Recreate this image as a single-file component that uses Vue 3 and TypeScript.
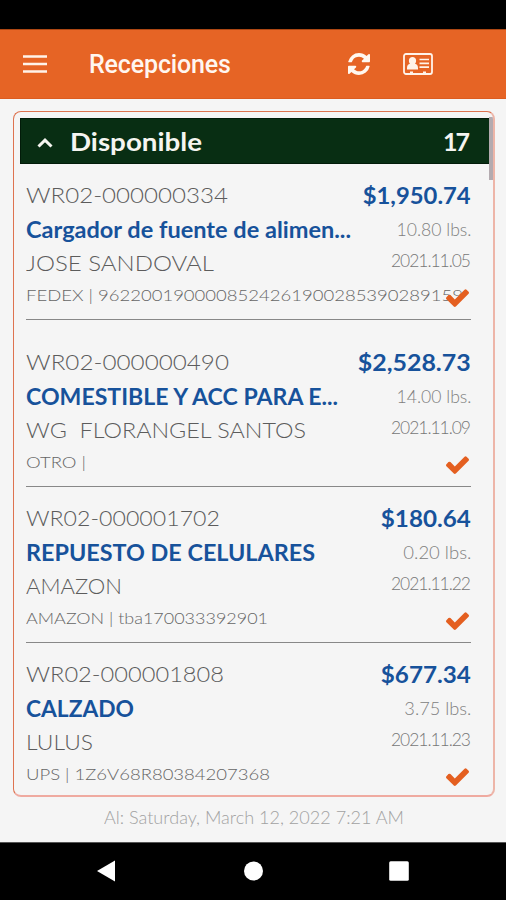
<script setup lang="ts">
interface Fitted {
  text: string
  width: number
}

interface Reception {
  code: Fitted
  title: Fitted
  name: Fitted
  carrier: Fitted
  price: Fitted
  weight: Fitted
  date: Fitted
}

const fitted = (text: string, width: number): Fitted => ({ text, width })

const receptions: Reception[] = [
  {
    code: fitted('WR02-000000334', 202),
    title: fitted('Cargador de fuente de alimen...', 325),
    name: fitted('JOSE SANDOVAL', 188),
    carrier: fitted('FEDEX | 9622001900008524261900285390289159', 437),
    price: fitted('$1,950.74', 108),
    weight: fitted('10.80 lbs.', 75),
    date: fitted('2021.11.05', 80),
  },
  {
    code: fitted('WR02-000000490', 203),
    title: fitted('COMESTIBLE Y ACC PARA E...', 312),
    name: fitted('WG  FLORANGEL SANTOS', 280),
    carrier: fitted('OTRO |', 60),
    price: fitted('$2,528.73', 113),
    weight: fitted('14.00 lbs.', 75),
    date: fitted('2021.11.09', 80),
  },
  {
    code: fitted('WR02-000001702', 194),
    title: fitted('REPUESTO DE CELULARES', 289),
    name: fitted('AMAZON', 96),
    carrier: fitted('AMAZON | tba170033392901', 242),
    price: fitted('$180.64', 90),
    weight: fitted('0.20 lbs.', 68),
    date: fitted('2021.11.22', 80),
  },
  {
    code: fitted('WR02-000001808', 198),
    title: fitted('CALZADO', 108),
    name: fitted('LULUS', 67),
    carrier: fitted('UPS | 1Z6V68R80384207368', 244),
    price: fitted('$677.34', 90),
    weight: fitted('3.75 lbs.', 67),
    date: fitted('2021.11.23', 80),
  },
]

// Widens short lines by stretching their letters; tightens long ones by tracking.
const vFit = {
  mounted(el: HTMLElement, binding: { value: number }) {
    const natural = el.getBoundingClientRect().width
    if (binding.value > natural) {
      el.style.transform = `scaleX(${binding.value / natural})`
      return
    }
    const gaps = Math.max(1, (el.textContent ?? '').length - 1)
    const spacing = (binding.value - natural) / gaps
    el.style.letterSpacing = `${spacing}px`
    el.style.marginRight = `${-spacing}px`
  },
}
</script>

<template>
  <div class="screen">
    <div class="status-bar"></div>
    <header class="app-bar">
      <svg class="menu-icon" viewBox="0 0 24 18">
        <path d="M0 1.5h24M0 9h24M0 16.5h24" />
      </svg>
      <h1><span v-fit="142">Recepciones</span></h1>
      <svg class="refresh-icon" viewBox="0 128 1536 1536">
        <path d="M1511 1056q0 5-1 7-64 268-268 434.5t-478 166.5q-146 0-282.5-55t-243.5-157l-129 129q-19 19-45 19t-45-19-19-45v-448q0-26 19-45t45-19h448q26 0 45 19t19 45-19 45l-137 137q71 66 161 102t187 36q134 0 250-65t186-179q11-17 53-117 8-23 30-23h192q13 0 22.5 9.5t9.5 22.5zm25-800v448q0 26-19 45t-45 19h-448q-26 0-45-19t-19-45 19-45l138-138q-148-137-349-137-134 0-250 65t-186 179q-11 17-53 117-8 23-30 23h-199q-13 0-22.5-9.5t-9.5-22.5v-7q65-268 270-434.5t480-166.5q146 0 284 55.5t245 156.5l130-129q19-19 45-19t45 19 19 45z" />
      </svg>
      <svg class="card-icon" viewBox="0 0 30 22">
        <rect class="outline" x="1" y="1" width="28" height="20" rx="2" />
        <path class="solid" d="M4 16.500v-1.500c0-2.500 1.200-4 3-4.200C6.100 9.900 5.900 8.600 5.900 7.500 5.900 5.200 7.400 4 9.500 4s3.600 1.200 3.600 3.500c0 1.100-.2 2.400-1.100 3.300 1.800.2 3 1.700 3 4.200V16.500zM7 18.500h3V20H7zM20 18.500h3V20h-3z" />
        <path class="lines" d="M16.500 6.500H26M16.500 10.300H26M16.500 14.200H26" />
      </svg>
    </header>

    <main class="content">
      <section class="card">
        <div class="group">
          <svg class="chevron" viewBox="0 0 16 10"><path d="M1.500 8.500 8 2.200l6.500 6.300" /></svg>
          <h2><span v-fit="132">Disponible</span></h2>
          <span class="count"><span v-fit="27">17</span></span>
        </div>
        <ul class="list">
          <li v-for="item in receptions" :key="item.code.text" class="row">
            <div class="details">
              <div class="line"><span v-fit="item.code.width">{{ item.code.text }}</span></div>
              <div class="line title"><span v-fit="item.title.width">{{ item.title.text }}</span></div>
              <div class="line"><span v-fit="item.name.width">{{ item.name.text }}</span></div>
              <div class="line carrier"><span v-fit="item.carrier.width">{{ item.carrier.text }}</span></div>
            </div>
            <div class="figures">
              <div class="line price"><span v-fit="item.price.width">{{ item.price.text }}</span></div>
              <div class="line weight"><span v-fit="item.weight.width">{{ item.weight.text }}</span></div>
              <div class="line date"><span v-fit="item.date.width">{{ item.date.text }}</span></div>
              <div class="check">
                <svg viewBox="121 314 1550 1208">
                  <path d="M1671 566q0 40-28 68l-724 724-136 136q-28 28-68 28t-68-28l-136-136-362-362q-28-28-28-68t28-68l136-136q28-28 68-28t68 28l294 295 656-657q28-28 68-28t68 28l136 136q28 28 28 68z" />
                </svg>
              </div>
            </div>
          </li>
        </ul>
        <div class="scrollbar"></div>
      </section>
      <p class="updated"><span v-fit="300">Al: Saturday, March 12, 2022 7:21 AM</span></p>
    </main>

    <nav class="nav-bar">
      <svg viewBox="0 0 20 22"><path d="M1 11 19 .5v21z" /></svg>
      <svg viewBox="0 0 20 22"><circle cx="10.500" cy="11" r="9.500" /></svg>
      <svg viewBox="0 0 20 22"><rect x=".2" y="1.200" width="19.600" height="19.600" rx="1.500" /></svg>
    </nav>
  </div>
</template>

<style>
body {
  margin: 0;
  background: #f5f5f5;
}
</style>

<style scoped>
.screen {
  display: flex;
  flex-direction: column;
  width: 506px;
  height: 900px;
  overflow: hidden;
  background: #f5f5f5;
  font-family: Lato, "Liberation Sans", sans-serif;
}

.status-bar {
  flex: none;
  height: 29px;
  background: #000;
}

.app-bar {
  display: flex;
  flex: none;
  align-items: center;
  box-sizing: border-box;
  height: 70px;
  padding-left: 23px;
  border-top: 1px solid #ad4713;
  border-bottom: 1px solid #dc5c20;
  background: #e66425;
}

.menu-icon {
  width: 24px;
  height: 18px;
  fill: none;
  stroke: #fff3ea;
  stroke-width: 2.6;
}

h1 {
  width: 259px;
  margin: 2px 0 0 42px;
  color: #fff6f0;
  font: 500 25px/30px Roboto, sans-serif;
  white-space: nowrap;
}

h1 span,
h2 span,
.count span,
.line span,
.updated span {
  display: inline-block;
  transform-origin: left center;
}

.figures .line span,
.count span {
  transform-origin: right center;
}

.refresh-icon {
  width: 22px;
  height: 22px;
  fill: #fff8f0;
}

.card-icon {
  width: 30px;
  height: 22px;
  margin-left: 33px;
}

.outline {
  fill: none;
  stroke: #fff3ea;
  stroke-width: 1.8;
}

.solid {
  fill: #fff3ea;
}

.lines {
  stroke: #fff3ea;
  stroke-width: 1.7;
}

.content {
  display: flex;
  flex: 1;
  flex-direction: column;
  min-height: 0;
  padding: 12px 11px 0 13px;
}

.card {
  position: relative;
  box-sizing: border-box;
  height: 686px;
  padding: 6px 4px 0 6px;
  overflow: hidden;
  border: 1px solid #de7350;
  border-right: 2px solid #edb5a8;
  border-bottom: 2px solid #efaaa0;
  border-radius: 8px;
}

.group {
  display: flex;
  align-items: center;
  box-sizing: border-box;
  width: 470px;
  height: 46px;
  padding: 0 19px 0 16px;
  border: 1px solid #021b09;
  background: #082e13;
  color: #f5f5f0;
}

.chevron {
  width: 16px;
  height: 10px;
  margin-top: 3px;
  fill: none;
  stroke: #f5f5f0;
  stroke-width: 3;
}

h2 {
  margin: 0 0 1px 17px;
  font: 700 25px/30px Lato, sans-serif;
}

.count {
  margin: 0 0 1px auto;
  font: 700 25px/30px Lato, sans-serif;
}

.list {
  margin: 0;
  padding: 0 18px 0 6px;
  list-style: none;
}

.row {
  display: flex;
  justify-content: space-between;
  box-sizing: border-box;
  height: 156px;
  padding-top: 14px;
  border-bottom: 1px solid #888;
}

.row:first-child {
  margin-bottom: 11px;
}

.row:last-child {
  border-bottom: 0;
}

.details {
  flex: 1;
  min-width: 0;
}

.figures {
  display: flex;
  flex: none;
  flex-direction: column;
  align-items: flex-end;
}

.line {
  height: 34px;
  color: #5c5c5c;
  font-size: 22px;
  font-weight: 300;
  line-height: 34px;
  white-space: pre;
}

.title,
.price {
  color: #17529b;
  font-weight: 700;
  line-height: 36px;
}

.carrier {
  height: 30px;
  color: #666;
  font-size: 16.500px;
  line-height: 30px;
}

.weight {
  color: #808080;
  font-size: 17.500px;
  line-height: 36px;
}

.date {
  height: 30px;
  color: #777;
  font-size: 17.500px;
  line-height: 30px;
}

.check {
  display: flex;
  align-items: center;
  height: 46px;
  margin-right: 2px;
  transform: translateZ(0);
}

.check svg {
  width: 23px;
  height: 18px;
  fill: #e45f20;
}

.scrollbar {
  position: absolute;
  top: 5px;
  right: 0;
  width: 4px;
  height: 63px;
  background: #b4abb0;
}

.updated {
  margin: 6px 0 0 91px;
  color: #a2a2a2;
  font-size: 17.500px;
  font-weight: 300;
  line-height: 30px;
  white-space: nowrap;
}

.nav-bar {
  display: flex;
  flex: none;
  align-items: center;
  justify-content: space-between;
  box-sizing: border-box;
  height: 58px;
  padding: 0 97px 1px 96px;
  border-top: 1px solid #555;
  background: #000;
}

.nav-bar svg {
  width: 20px;
  height: 22px;
  fill: #fff;
}
</style>
